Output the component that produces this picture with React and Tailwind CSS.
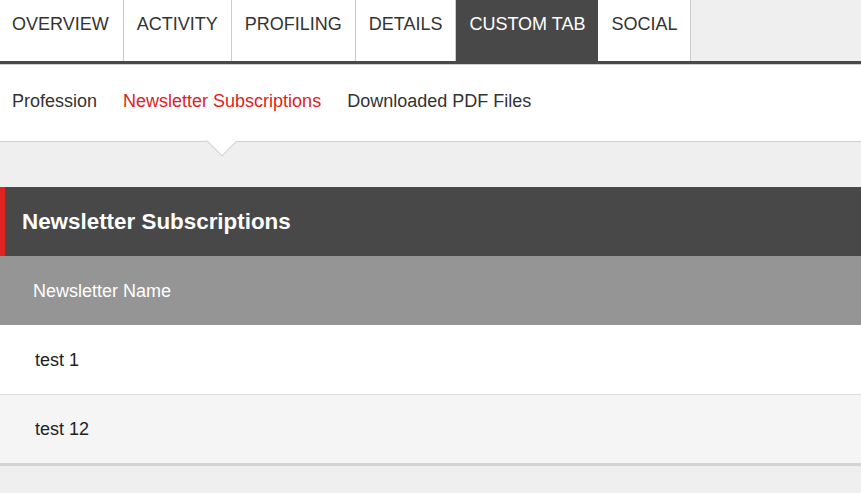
import React from 'react';

const tabs = ['OVERVIEW', 'ACTIVITY', 'PROFILING', 'DETAILS', 'CUSTOM TAB', 'SOCIAL'];
const subTabs = ['Profession', 'Newsletter Subscriptions', 'Downloaded PDF Files'];
const rows = ['test 1', 'test 12'];

export default function App() {
  return (
    <div className="min-h-screen bg-[#efefef] font-['Liberation_Sans',Arial,sans-serif]">
      {/* main tabs */}
      <div className="flex h-[64px] border-b-[3px] border-[#484848]">
        {tabs.map((t, i) => (
          <div
            key={t}
            className={
              t === 'CUSTOM TAB'
                ? 'bg-[#484848] px-[13px] pt-[14px] text-[18px] leading-[21px] text-white'
                : i === 0
                  ? 'border-r border-[#cccccc] bg-white pr-[14px] pl-[12px] pt-[14px] text-[18px] leading-[21px] text-[#333]'
                  : 'border-r border-[#cccccc] bg-white px-[13px] pt-[14px] text-[18px] leading-[21px] text-[#333]'
            }
          >
            {t}
          </div>
        ))}
      </div>

      {/* sub tabs */}
      <div className="flex h-[78px] border-t border-b border-[#d0d0d0] bg-white">
        <div className="-ml-[1px] flex">
          {subTabs.map((t) => (
            <div
              key={t}
              className={
                t === 'Newsletter Subscriptions'
                  ? 'relative flex items-center px-[13px] pb-[3px] text-[18px] text-[#e0221d]'
                  : 'relative flex items-center px-[13px] pb-[3px] text-[18px] text-[#333]'
              }
            >
              {t}
              {t === 'Newsletter Subscriptions' && (
                <span className="absolute bottom-[-11px] left-1/2 h-[22px] w-[22px] -translate-x-1/2 rotate-45 border-r border-b border-[#d0d0d0] bg-white" />
              )}
            </div>
          ))}
        </div>
      </div>

      <div className="h-[45px]" />

      {/* section header */}
      <div className="flex h-[69px] items-center border-l-[5px] border-[#e0231e] bg-[#484848] pl-[17px] text-[22.4px] font-bold text-white">
        Newsletter Subscriptions
      </div>

      {/* table */}
      <div className="flex h-[69px] items-center bg-[#959595] px-[33px] pt-[2px] text-[18px] text-white">
        Newsletter Name
      </div>
      {rows.map((r, i) => (
        <div
          key={r}
          className={
            i === 0
              ? 'flex h-[70px] items-center border-b border-[#dddddd] bg-white px-[35px] pt-[2px] text-[18px] text-[#222]'
              : 'flex h-[71px] items-center border-b-[3px] border-[#d3d3d3] bg-[#f5f5f5] px-[35px] pt-[1px] text-[18px] text-[#222]'
          }
        >
          {r}
        </div>
      ))}
    </div>
  );
}
